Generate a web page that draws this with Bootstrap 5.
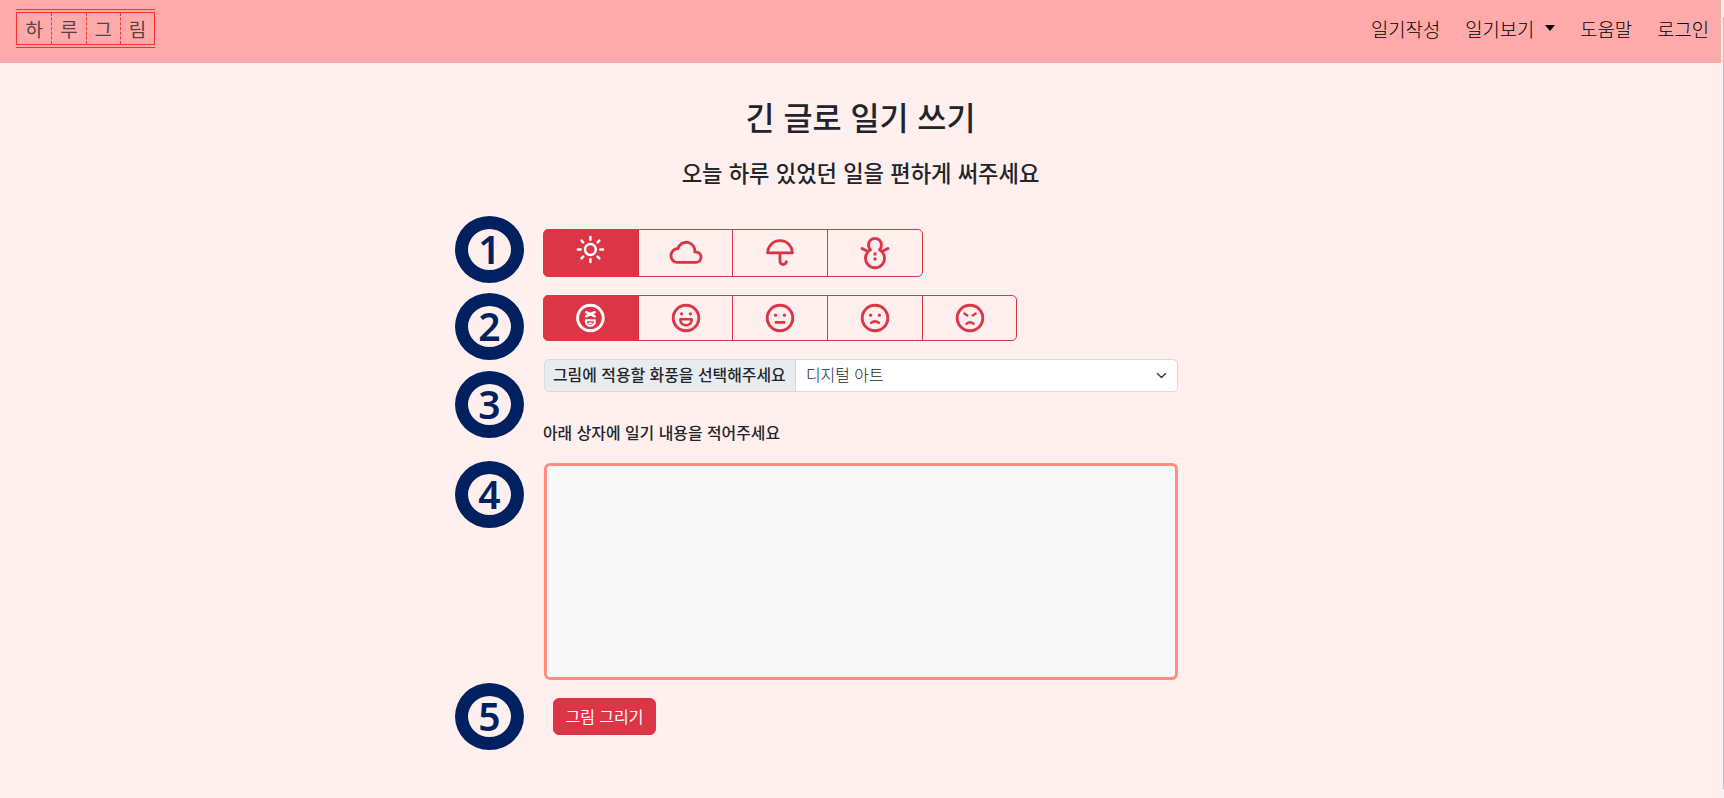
<!DOCTYPE html>
<html lang="ko">
<head>
<meta charset="utf-8">
<meta name="viewport" content="width=device-width, initial-scale=1">
<title>하루그림</title>
<link href="https://cdn.jsdelivr.net/npm/bootstrap@5.3.0/dist/css/bootstrap.min.css" rel="stylesheet">
<style>
  html, body { height: 100%; overflow: hidden; }
  body { font-family: "Noto Sans CJK KR", sans-serif; background: #f3f3f3; color: #212529; }
  .page { width: 1721px; height: 798px; background: #ffefee; }
  .track { width: 3px; padding-top: 17px; }
  .thumb { width: 1px; height: 772px; background: #b9b9b9; }
  .topbar { height: 63px; background: #ffaaaa; padding: 0 12px 0 16px; }
  .brand { width: 139px; height: 39px; margin-top: -6px; border-top: 1px solid #ff3030; border-bottom: 1px solid #ff3030; padding: 2px 0; }
  .brand-box { border: 1px solid #ff3030; height: 33px; }
  .brand-box span { width: 25%; line-height: 31px; font-size: 19px; font-weight: 400; text-align: center; color: #5c4144; }
  .brand-box span + span { border-left: 1px dashed #ff3030; }
  .menu { gap: 25px; font-size: 18.8px; font-weight: 300; line-height: 28px; margin-top: -6px; }
  .menu a { color: #000; text-decoration: none; white-space: nowrap; }
  .caret { width: 0; height: 0; border: 5.5px solid transparent; border-top: 6px solid #000; border-bottom: 0; margin: 0 0 1px 11px; }
  h1 { font-size: 31.6px; line-height: 40px; margin: 32.5px 0 0; font-weight: 500; }
  h2 { font-size: 22.2px; line-height: 30px; margin: 21.5px 0 0; font-weight: 500; }
  .work { margin: 29px 0 0 455px; }
  .step { width: 69px; height: 67px; border: 13px solid #002060; border-radius: 50%; color: #002060; font: 600 39px/39px "Noto Sans", sans-serif; }
  .form-side { width: 636px; margin: 13px 0 0 19px; }
  .choice { align-self: flex-start; }
  .choice .btn { width: 95.7px; padding: 0; --bs-btn-border-radius: 5px; display: flex; align-items: center; justify-content: center; }
  .weather .btn { height: 48px; }
  .mood { margin-top: 18px; }
  .mood .btn { height: 46px; }
  .choice svg { width: 36px; height: 36px; fill: none; stroke: currentColor; stroke-width: 2.9; stroke-linecap: round; stroke-linejoin: round; }
  .choice .dot { fill: currentColor; stroke: none; }
  .style-row { margin: 18px 0 0 1px; width: 634px; height: 33px; }
  .style-row .input-group-text { width: 252px; padding: 0 0 1px 8px; font-size: 15.9px; font-weight: 500; background: #e9ecef; border-color: #d5dae0; border-radius: 5px; }
  .style-row .form-select { padding: 0 30px 1px 10px; font-size: 15.9px; font-weight: 300; border-color: #d5dae0; border-radius: 5px; background-size: 11px 11px; background-position: right 10px center; }
  .prompt { font-size: 15.9px; font-weight: 500; line-height: 24px; margin: 29px 0 0; }
  .diary { height: 217px; margin: 18px 0 0 1px; width: 634px; background: #f8f8f8; border: 3px solid #ff8d80; border-radius: 6px; resize: none; }
  .draw { width: 103px; height: 37px; margin: 18px 0 0 10px; padding: 0 0 1px; border-radius: 6px; }
</style>
</head>
<body>
<div class="d-flex">
  <div class="page">
    <nav class="topbar d-flex align-items-center justify-content-between">
      <a class="brand text-decoration-none" href="#">
        <div class="brand-box d-flex"><span>하</span><span>루</span><span>그</span><span>림</span></div>
      </a>
      <div class="menu d-flex">
        <a href="#">일기작성</a>
        <a href="#" class="d-flex align-items-center">일기보기<span class="caret"></span></a>
        <a href="#">도움말</a>
        <a href="#">로그인</a>
      </div>
    </nav>
    <header class="text-center">
      <h1>긴 글로 일기 쓰기</h1>
      <h2>오늘 하루 있었던 일을 편하게 써주세요</h2>
    </header>
    <main class="work d-flex">
      <div class="d-flex flex-column">
        <div class="step text-center">1</div>
        <div class="step text-center" style="margin-top:10px">2</div>
        <div class="step text-center" style="margin-top:11px">3</div>
        <div class="step text-center" style="margin-top:23px">4</div>
        <div class="step text-center" style="margin-top:155px">5</div>
      </div>
      <form class="form-side d-flex flex-column">
        <div class="choice weather btn-group">
          <button type="button" class="btn btn-outline-danger active" aria-label="맑음">
            <svg viewBox="0 0 36 36"><g stroke-width="2.5" transform="translate(-.6 -3.5)"><circle cx="18" cy="18" r="5.4"/><path d="M18 5.4v2.8M18 27.8v2.8M5.4 18h2.8M27.8 18h2.8M9.1 9.1l1.7 1.7M25.2 25.2l1.7 1.7M9.1 26.9l1.7-1.7M25.2 10.8l1.7-1.7"/></g></svg>
          </button>
          <button type="button" class="btn btn-outline-danger" aria-label="흐림">
            <svg viewBox="0 0 36 36"><path d="M9.2 27.4h18.8a5 5.2 0 0 0 1-10.3c-.7-.3-1.6-.3-2.2-.2A8.6 8.8 0 0 0 10 13.5C5.9 13.6 3 17 3 20.8A6.4 6.6 0 0 0 9.2 27.4z"/></svg>
          </button>
          <button type="button" class="btn btn-outline-danger" aria-label="비">
            <svg viewBox="0 0 36 36"><path d="M5.7 17.9a12.3 12.3 0 0 1 24.6 0zM18 17.9v8.9a3.2 3.2 0 0 0 6.3 0"/></svg>
          </button>
          <button type="button" class="btn btn-outline-danger" aria-label="눈">
            <svg viewBox="0 0 36 36"><path d="M13.4 14.8a6.5 6.7 0 1 1 9.2 0a9.5 9.6 0 1 1-9.2 0zM10.5 16.3l-5.4-2.8M25.5 16.3l5.4-2.8"/><circle class="dot" cx="18" cy="19" r="1.7"/><circle class="dot" cx="18" cy="24" r="1.7"/></svg>
          </button>
        </div>
        <div class="choice mood btn-group">
          <button type="button" class="btn btn-outline-danger active" aria-label="아주 좋음">
            <svg viewBox="0 0 36 36"><g transform="translate(-.6 0)"><circle cx="18" cy="18" r="12.8"/><path stroke-width="2.4" d="M13.7 12.2L18 14.2l4.3-2M13.7 16.3L18 14.2l4.3 2.1"/><path stroke-width="2" d="M13.5 20.2h9v1.2a4.5 4.4 0 0 1-9 0z"/><path stroke-width="1.6" d="M16.6 23.4h2.8"/></g></svg>
          </button>
          <button type="button" class="btn btn-outline-danger" aria-label="좋음">
            <svg viewBox="0 0 36 36"><circle cx="18" cy="18" r="12.8"/><circle class="dot" cx="13.6" cy="13.8" r="1.6"/><circle class="dot" cx="22.4" cy="13.8" r="1.6"/><path stroke-width="2.6" d="M12.4 19.2h11.2v1a5.6 5 0 0 1-11.2 0z"/></svg>
          </button>
          <button type="button" class="btn btn-outline-danger" aria-label="보통">
            <svg viewBox="0 0 36 36"><circle cx="18" cy="18" r="12.8"/><circle class="dot" cx="13.6" cy="15.2" r="1.6"/><circle class="dot" cx="22.4" cy="15.2" r="1.6"/><path stroke-width="2.6" d="M13.8 22.4h8.4"/></svg>
          </button>
          <button type="button" class="btn btn-outline-danger" aria-label="나쁨">
            <svg viewBox="0 0 36 36"><circle cx="18" cy="18" r="12.8"/><circle class="dot" cx="13.6" cy="15.2" r="1.6"/><circle class="dot" cx="22.4" cy="15.2" r="1.6"/><path stroke-width="2.6" d="M14.2 22.8q3.8-2.8 7.6 0"/></svg>
          </button>
          <button type="button" class="btn btn-outline-danger" aria-label="화남">
            <svg viewBox="0 0 36 36"><circle cx="18" cy="18" r="12.8"/><path stroke-width="2.4" d="M12.4 13.6l2.9 1.8M23.6 13.6l-2.9 1.8M14.4 23.8q3.6-3 7.2 0"/></svg>
          </button>
        </div>
        <div class="style-row input-group flex-nowrap">
          <label class="input-group-text" for="art">그림에 적용할 화풍을 선택해주세요</label>
          <select class="form-select" id="art"><option>디지털 아트</option></select>
        </div>
        <label class="prompt" for="diary">아래 상자에 일기 내용을 적어주세요</label>
        <textarea class="diary" id="diary"></textarea>
        <button type="button" class="draw btn btn-danger">그림 그리기</button>
      </form>
    </main>
  </div>
  <div class="track d-flex justify-content-end"><div class="thumb"></div></div>
</div>
<script src="https://cdn.jsdelivr.net/npm/bootstrap@5.3.0/dist/js/bootstrap.bundle.min.js"></script>
</body>
</html>
